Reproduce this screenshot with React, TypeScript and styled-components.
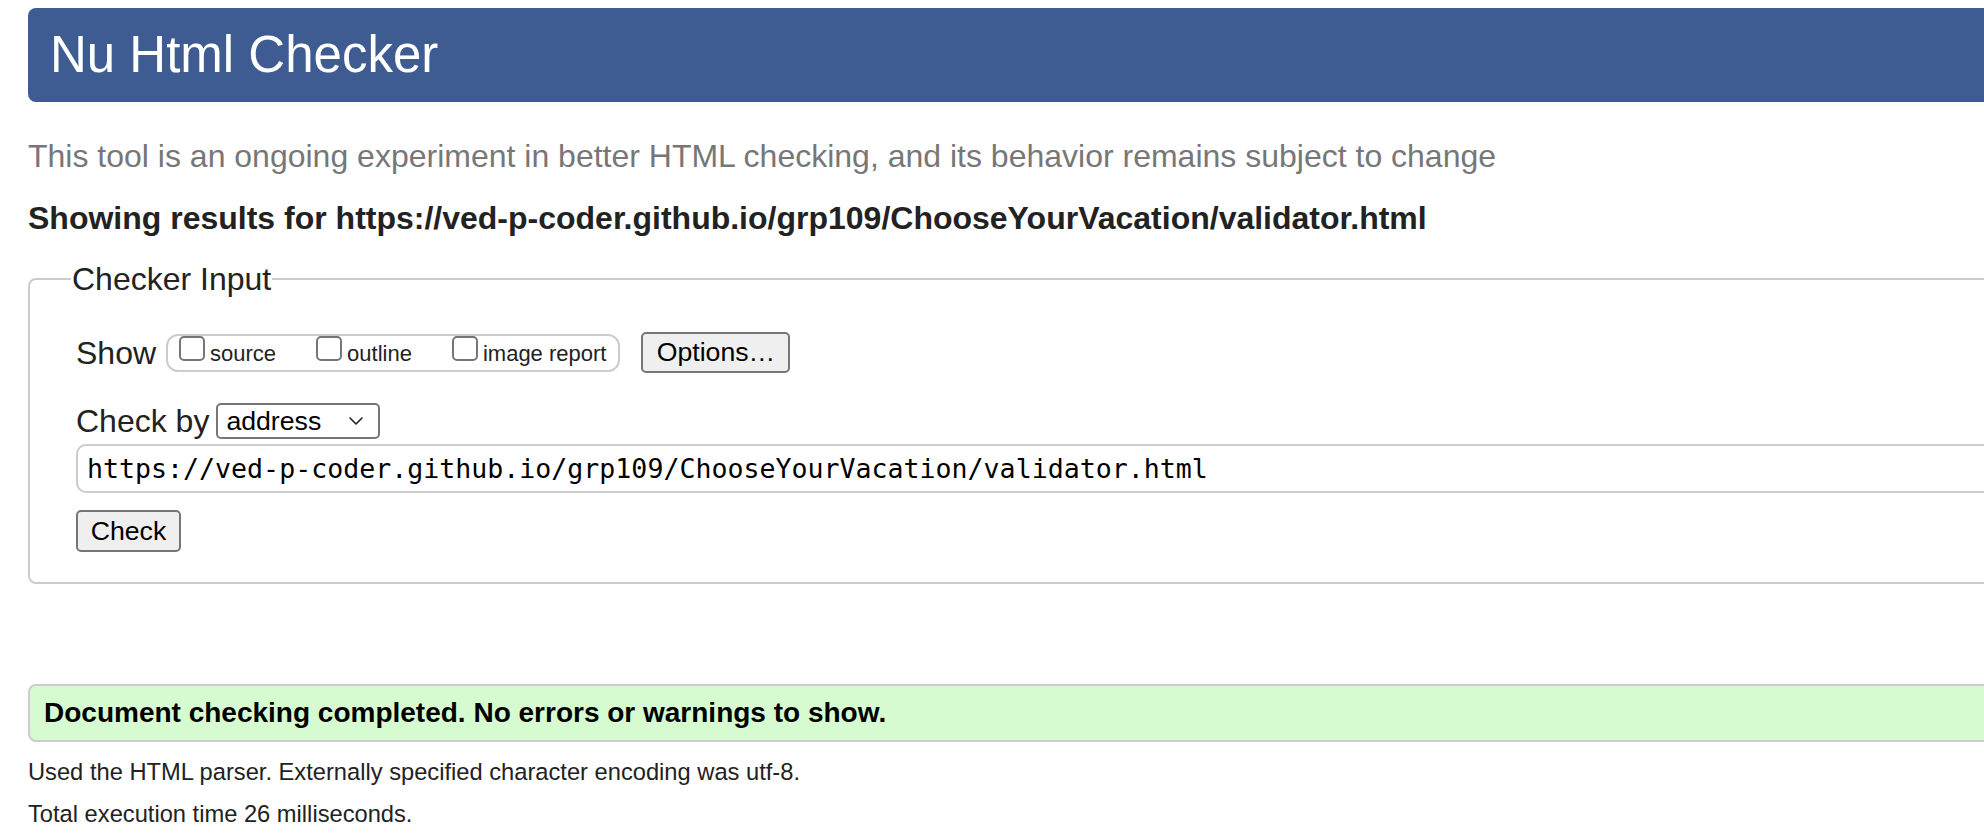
import React from "react";
import styled, { createGlobalStyle } from "styled-components";

const GlobalStyle = createGlobalStyle`
  html, body {
    margin: 0;
    padding: 0;
    background: #fff;
    overflow: hidden;
  }
  body {
    font-family: "Liberation Sans", Arial, Helvetica, sans-serif;
    color: #222;
  }
`;

const Page = styled.div`
  width: 2400px;
  padding: 8px 0 0 28px;
  box-sizing: border-box;
`;

const Header = styled.h1`
  margin: 0;
  height: 94px;
  background: #3e5c91;
  border-radius: 8px;
  color: #fff;
  font-weight: 400;
  font-size: 51px;
  line-height: 94px;
  padding-left: 22px;
`;

const Subtitle = styled.p`
  margin: 34px 0 0;
  font-size: 32px;
  line-height: 40px;
  color: #777;
`;

const ResultsHeading = styled.h2`
  margin: 22px 0 0;
  font-size: 32px;
  line-height: 40px;
  font-weight: 700;
  color: #222;
`;

const InputFieldset = styled.fieldset`
  margin: 24px 0 0;
  border: 2px solid #ccc;
  border-radius: 8px;
  padding: 36px 0 30px 46px;
  min-width: 0;
`;

const Legend = styled.legend`
  margin-left: -5px;
  padding: 0 1px;
  font-size: 32px;
  line-height: 34px;
  color: #222;
`;

const Row = styled.div<{ $gap?: number }>`
  display: flex;
  align-items: center;
  margin-top: ${(p) => p.$gap ?? 0}px;
`;

const RowLabel = styled.span<{ $space: number }>`
  font-size: 32px;
  line-height: 36px;
  color: #222;
  margin-right: ${(p) => p.$space}px;
`;

const ShowGroup = styled.div`
  display: flex;
  align-items: flex-start;
  gap: 40px;
  height: 34px;
  padding: 0 12px 0 11px;
  border: 2px solid #ccc;
  border-radius: 12px;
`;

const Option = styled.label`
  display: flex;
  align-items: baseline;
  gap: 5px;
`;

const Box = styled.span`
  display: block;
  width: 22px;
  height: 21px;
  border: 2px solid #767676;
  border-radius: 5px;
  background: #fff;
`;

const OptionText = styled.span`
  font-size: 22px;
  line-height: 22px;
  color: #222;
`;

const Button = styled.button<{ $w: number; $h: number }>`
  box-sizing: border-box;
  width: ${(p) => p.$w}px;
  height: ${(p) => p.$h}px;
  padding: 0;
  border: 2px solid #767676;
  border-radius: 5px;
  background: #efefef;
  color: #000;
  font-family: "Liberation Sans", Arial, sans-serif;
  font-size: 26.67px;
`;

const OptionsButton = styled(Button)`
  margin-left: 21px;
`;

const SelectBox = styled.div`
  box-sizing: border-box;
  width: 164px;
  height: 36px;
  display: flex;
  align-items: center;
  justify-content: space-between;
  padding: 0 14px 0 8px;
  border: 2px solid #767676;
  border-radius: 5px;
  background: #fff;
  font-size: 26.67px;
  color: #000;
`;

const UrlInput = styled.input`
  display: block;
  box-sizing: border-box;
  width: 100%;
  height: 49px;
  margin-top: 5px;
  padding: 0 9px;
  border: 2px solid #ccc;
  border-radius: 10px;
  font-family: "DejaVu Sans Mono", "Liberation Mono", monospace;
  font-size: 26.6px;
  color: #000;
  background: #fff;
  outline: none;
`;

const CheckRow = styled.div`
  margin-top: 17px;
`;

const SuccessBox = styled.p`
  margin: 100px 0 0;
  height: 54px;
  border: 2px solid #ccc;
  border-radius: 8px;
  background: #d6fbd1;
  padding-left: 14px;
  font-size: 28px;
  font-weight: 700;
  line-height: 54px;
  color: #000;
`;

const Note = styled.p<{ $gap: number }>`
  margin: ${(p) => p.$gap}px 0 0;
  font-size: 23.7px;
  line-height: 30px;
  color: #222;
`;

const Chevron = () => (
  <svg width="16" height="10" viewBox="0 0 16 10" fill="none">
    <path d="M2 2 L8 8 L14 2" stroke="#222" strokeWidth="1.6" strokeLinecap="round" strokeLinejoin="round" />
  </svg>
);

const url = "https://ved-p-coder.github.io/grp109/ChooseYourVacation/validator.html";

export default function App() {
  return (
    <>
      <GlobalStyle />
      <Page>
        <Header>Nu Html Checker</Header>
        <Subtitle>
          This tool is an ongoing experiment in better HTML checking, and its behavior remains subject to change
        </Subtitle>
        <ResultsHeading>Showing results for {url}</ResultsHeading>
        <InputFieldset>
          <Legend>Checker Input</Legend>
          <Row>
            <RowLabel $space={10}>Show</RowLabel>
            <ShowGroup>
              <Option>
                <Box />
                <OptionText>source</OptionText>
              </Option>
              <Option>
                <Box />
                <OptionText>outline</OptionText>
              </Option>
              <Option>
                <Box />
                <OptionText>image report</OptionText>
              </Option>
            </ShowGroup>
            <OptionsButton $w={149} $h={41}>Options…</OptionsButton>
          </Row>
          <Row $gap={30}>
            <RowLabel $space={7}>Check by</RowLabel>
            <SelectBox>
              <span>address</span>
              <Chevron />
            </SelectBox>
          </Row>
          <UrlInput defaultValue={url} readOnly />
          <CheckRow>
            <Button $w={105} $h={42}>Check</Button>
          </CheckRow>
        </InputFieldset>
        <SuccessBox>Document checking completed. No errors or warnings to show.</SuccessBox>
        <Note $gap={15}>Used the HTML parser. Externally specified character encoding was utf-8.</Note>
        <Note $gap={12}>Total execution time 26 milliseconds.</Note>
      </Page>
    </>
  );
}
